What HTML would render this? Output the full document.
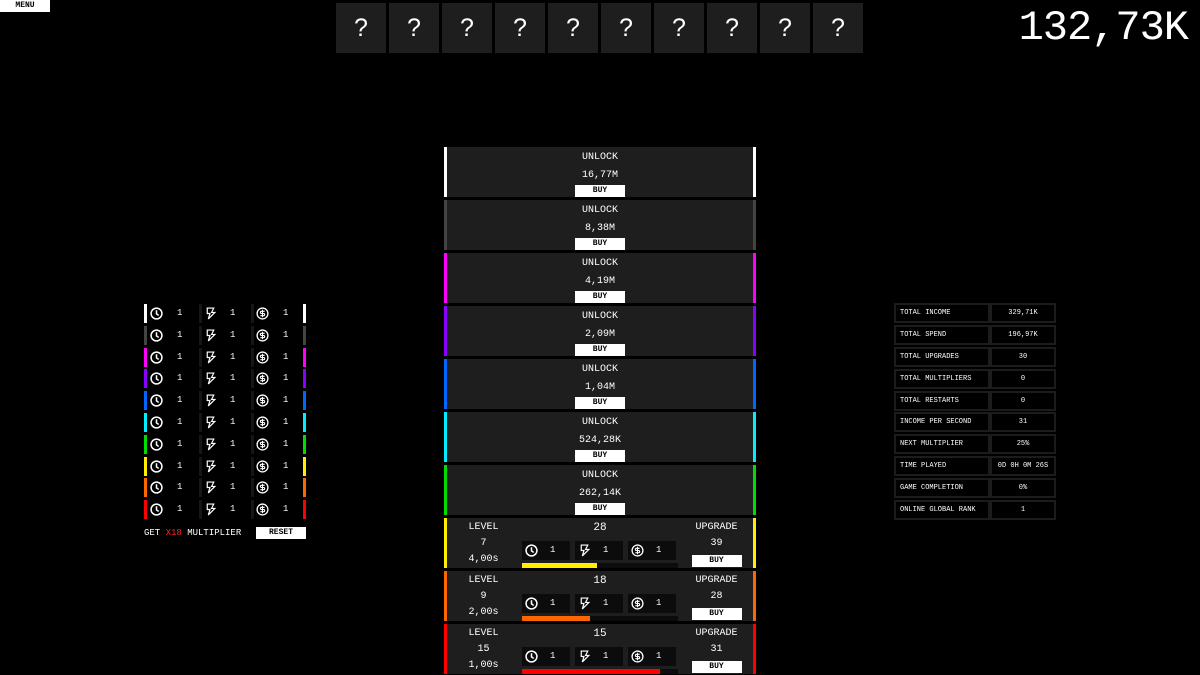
<!DOCTYPE html>
<html><head><meta charset="utf-8"><style>
*{margin:0;padding:0;box-sizing:border-box}
body{width:1200px;height:675px;background:#000;color:#fff;font-family:"Liberation Mono",monospace;position:relative;overflow:hidden}
.a{position:absolute}
.menu{left:0;top:0;width:50px;height:12px;background:#fff;color:#000;font-size:8px;font-weight:bold;text-align:center;line-height:12px}
.q{top:3px;width:50px;height:50px;background:#1e1e1e;font-family:"Liberation Sans",sans-serif;font-size:25px;line-height:50px;text-align:center}
.money{right:12px;top:3px;font-size:42px;line-height:50px;letter-spacing:-1px}
.row{left:444px;width:312px;height:50px;background:#1e1e1e;border-left:3px solid;border-right:3px solid;font-size:10px;text-align:center}
.row .t1{position:absolute;left:0;right:0;top:5px}
.row .t2{position:absolute;left:0;right:0;top:23px}
.buy{position:absolute;background:#fff;color:#000;font-size:8px;font-weight:bold;text-align:center;line-height:12px;height:12px;width:50px}
.row .buy{left:128px;top:38px}
.lc{position:absolute;left:0;width:73px;text-align:center;font-size:10px;line-height:16px;top:2px}
.rc{position:absolute;left:233px;width:73px;text-align:center;font-size:10px;line-height:16px;top:2px}
.rc .buy{position:static;margin:3px auto 0;width:50px;height:12px}
.num{position:absolute;left:75px;width:156px;text-align:center;top:4px;font-size:11px}
.ib{position:absolute;top:23px;width:48px;height:19px;background:#0c0c0c;font-size:9px}
.ib svg{position:absolute;left:3px;top:3px}
.ib span{position:absolute;left:28px;top:4px}
.trk{position:absolute;left:75px;top:45px;width:156px;height:5px;background:#0c0c0c}
.fill{height:5px}
.g{left:144px;width:163px;height:19px}
.g .cb{position:absolute;top:0;width:3px;height:19px}
.g .sep{position:absolute;top:0;width:3px;height:19px;background:#161616}
.g svg{position:absolute;top:3px}
.g span{position:absolute;top:4px;font-size:9px}
.st{left:894px;height:20px;background:#000;border:2px solid #1c1c1c;font-size:7px;line-height:16px}
.s1{width:96px;padding-left:4px}
.s2{left:990px;width:66px;text-align:center}
</style></head><body>
<div class="a menu">MENU</div>
<div class="a q" style="left:336px">?</div><div class="a q" style="left:389px">?</div><div class="a q" style="left:442px">?</div><div class="a q" style="left:495px">?</div><div class="a q" style="left:548px">?</div><div class="a q" style="left:601px">?</div><div class="a q" style="left:654px">?</div><div class="a q" style="left:707px">?</div><div class="a q" style="left:760px">?</div><div class="a q" style="left:813px">?</div>
<div class="a money">132,73K</div>

<svg width="0" height="0" style="position:absolute"><defs>
<symbol id="ck" viewBox="0 0 12 12"><circle cx="6" cy="6" r="5" fill="none" stroke="#fff" stroke-width="1.4"/><path d="M6 3v3.3l2 1.5" fill="none" stroke="#fff" stroke-width="1.4"/></symbol>
<symbol id="bt" viewBox="0 0 12 12"><path d="M3 1h6l-2 4h3l-6 6 1.5-5H3z" fill="none" stroke="#fff" stroke-width="1.1"/></symbol>
<symbol id="dl" viewBox="0 0 12 12"><circle cx="6" cy="6" r="5" fill="none" stroke="#fff" stroke-width="1.2"/><path d="M8 4H5a1 1 0 0 0 0 2h2a1 1 0 0 1 0 2H4M6 2.5v7" fill="none" stroke="#fff" stroke-width="1"/></symbol>
</defs></svg>

<div class="a row" style="top:147px;border-color:#fff"><div class="t1">UNLOCK</div><div class="t2">16,77M</div><div class="buy">BUY</div></div>
<div class="a row" style="top:200px;border-color:#444"><div class="t1">UNLOCK</div><div class="t2">8,38M</div><div class="buy">BUY</div></div>
<div class="a row" style="top:253px;border-color:#f0f"><div class="t1">UNLOCK</div><div class="t2">4,19M</div><div class="buy">BUY</div></div>
<div class="a row" style="top:306px;border-color:#80f"><div class="t1">UNLOCK</div><div class="t2">2,09M</div><div class="buy">BUY</div></div>
<div class="a row" style="top:359px;border-color:#06f"><div class="t1">UNLOCK</div><div class="t2">1,04M</div><div class="buy">BUY</div></div>
<div class="a row" style="top:412px;border-color:#0ef"><div class="t1">UNLOCK</div><div class="t2">524,28K</div><div class="buy">BUY</div></div>
<div class="a row" style="top:465px;border-color:#0d0"><div class="t1">UNLOCK</div><div class="t2">262,14K</div><div class="buy">BUY</div></div>

<div class="a row" style="top:518px;border-color:#fe0"><div class="lc">LEVEL<br>7<br>4,00s</div><div class="num">28</div>
<div class="ib" style="left:75px"><svg width="13" height="13"><use href="#ck"/></svg><span>1</span></div><div class="ib" style="left:128px"><svg width="13" height="13"><use href="#bt"/></svg><span>1</span></div><div class="ib" style="left:181px"><svg width="13" height="13"><use href="#dl"/></svg><span>1</span></div>
<div class="trk"><div class="fill" style="width:75px;background:#fe0"></div></div><div class="rc">UPGRADE<br>39<div class="buy">BUY</div></div></div>

<div class="a row" style="top:571px;border-color:#f60"><div class="lc">LEVEL<br>9<br>2,00s</div><div class="num">18</div>
<div class="ib" style="left:75px"><svg width="13" height="13"><use href="#ck"/></svg><span>1</span></div><div class="ib" style="left:128px"><svg width="13" height="13"><use href="#bt"/></svg><span>1</span></div><div class="ib" style="left:181px"><svg width="13" height="13"><use href="#dl"/></svg><span>1</span></div>
<div class="trk"><div class="fill" style="width:68px;background:#f60"></div></div><div class="rc">UPGRADE<br>28<div class="buy">BUY</div></div></div>

<div class="a row" style="top:624px;border-color:#f00"><div class="lc">LEVEL<br>15<br>1,00s</div><div class="num">15</div>
<div class="ib" style="left:75px"><svg width="13" height="13"><use href="#ck"/></svg><span>1</span></div><div class="ib" style="left:128px"><svg width="13" height="13"><use href="#bt"/></svg><span>1</span></div><div class="ib" style="left:181px"><svg width="13" height="13"><use href="#dl"/></svg><span>1</span></div>
<div class="trk"><div class="fill" style="width:138px;background:#f00"></div></div><div class="rc">UPGRADE<br>31<div class="buy">BUY</div></div></div>

<div class="a g" style="top:304px"><div class="cb" style="left:0;background:#fff"></div><svg style="left:6px" width="13" height="13"><use href="#ck"/></svg><span style="left:33px">1</span><div class="sep" style="left:55px"></div><svg style="left:60px" width="13" height="13"><use href="#bt"/></svg><span style="left:86px">1</span><div class="sep" style="left:107px"></div><svg style="left:112px" width="13" height="13"><use href="#dl"/></svg><span style="left:139px">1</span><div class="cb" style="left:159px;background:#fff"></div></div>
<div class="a g" style="top:326px"><div class="cb" style="left:0;background:#444"></div><svg style="left:6px" width="13" height="13"><use href="#ck"/></svg><span style="left:33px">1</span><div class="sep" style="left:55px"></div><svg style="left:60px" width="13" height="13"><use href="#bt"/></svg><span style="left:86px">1</span><div class="sep" style="left:107px"></div><svg style="left:112px" width="13" height="13"><use href="#dl"/></svg><span style="left:139px">1</span><div class="cb" style="left:159px;background:#444"></div></div>
<div class="a g" style="top:348px"><div class="cb" style="left:0;background:#f0f"></div><svg style="left:6px" width="13" height="13"><use href="#ck"/></svg><span style="left:33px">1</span><div class="sep" style="left:55px"></div><svg style="left:60px" width="13" height="13"><use href="#bt"/></svg><span style="left:86px">1</span><div class="sep" style="left:107px"></div><svg style="left:112px" width="13" height="13"><use href="#dl"/></svg><span style="left:139px">1</span><div class="cb" style="left:159px;background:#f0f"></div></div>
<div class="a g" style="top:369px"><div class="cb" style="left:0;background:#80f"></div><svg style="left:6px" width="13" height="13"><use href="#ck"/></svg><span style="left:33px">1</span><div class="sep" style="left:55px"></div><svg style="left:60px" width="13" height="13"><use href="#bt"/></svg><span style="left:86px">1</span><div class="sep" style="left:107px"></div><svg style="left:112px" width="13" height="13"><use href="#dl"/></svg><span style="left:139px">1</span><div class="cb" style="left:159px;background:#80f"></div></div>
<div class="a g" style="top:391px"><div class="cb" style="left:0;background:#06f"></div><svg style="left:6px" width="13" height="13"><use href="#ck"/></svg><span style="left:33px">1</span><div class="sep" style="left:55px"></div><svg style="left:60px" width="13" height="13"><use href="#bt"/></svg><span style="left:86px">1</span><div class="sep" style="left:107px"></div><svg style="left:112px" width="13" height="13"><use href="#dl"/></svg><span style="left:139px">1</span><div class="cb" style="left:159px;background:#06f"></div></div>
<div class="a g" style="top:413px"><div class="cb" style="left:0;background:#0ef"></div><svg style="left:6px" width="13" height="13"><use href="#ck"/></svg><span style="left:33px">1</span><div class="sep" style="left:55px"></div><svg style="left:60px" width="13" height="13"><use href="#bt"/></svg><span style="left:86px">1</span><div class="sep" style="left:107px"></div><svg style="left:112px" width="13" height="13"><use href="#dl"/></svg><span style="left:139px">1</span><div class="cb" style="left:159px;background:#0ef"></div></div>
<div class="a g" style="top:435px"><div class="cb" style="left:0;background:#0d0"></div><svg style="left:6px" width="13" height="13"><use href="#ck"/></svg><span style="left:33px">1</span><div class="sep" style="left:55px"></div><svg style="left:60px" width="13" height="13"><use href="#bt"/></svg><span style="left:86px">1</span><div class="sep" style="left:107px"></div><svg style="left:112px" width="13" height="13"><use href="#dl"/></svg><span style="left:139px">1</span><div class="cb" style="left:159px;background:#0d0"></div></div>
<div class="a g" style="top:457px"><div class="cb" style="left:0;background:#fe0"></div><svg style="left:6px" width="13" height="13"><use href="#ck"/></svg><span style="left:33px">1</span><div class="sep" style="left:55px"></div><svg style="left:60px" width="13" height="13"><use href="#bt"/></svg><span style="left:86px">1</span><div class="sep" style="left:107px"></div><svg style="left:112px" width="13" height="13"><use href="#dl"/></svg><span style="left:139px">1</span><div class="cb" style="left:159px;background:#fe0"></div></div>
<div class="a g" style="top:478px"><div class="cb" style="left:0;background:#f60"></div><svg style="left:6px" width="13" height="13"><use href="#ck"/></svg><span style="left:33px">1</span><div class="sep" style="left:55px"></div><svg style="left:60px" width="13" height="13"><use href="#bt"/></svg><span style="left:86px">1</span><div class="sep" style="left:107px"></div><svg style="left:112px" width="13" height="13"><use href="#dl"/></svg><span style="left:139px">1</span><div class="cb" style="left:159px;background:#f60"></div></div>
<div class="a g" style="top:500px"><div class="cb" style="left:0;background:#f00"></div><svg style="left:6px" width="13" height="13"><use href="#ck"/></svg><span style="left:33px">1</span><div class="sep" style="left:55px"></div><svg style="left:60px" width="13" height="13"><use href="#bt"/></svg><span style="left:86px">1</span><div class="sep" style="left:107px"></div><svg style="left:112px" width="13" height="13"><use href="#dl"/></svg><span style="left:139px">1</span><div class="cb" style="left:159px;background:#f00"></div></div>

<div class="a" style="left:144px;top:527px;font-size:9px;line-height:12px">GET <span style="color:#f22">X18</span> MULTIPLIER</div>
<div class="a buy" style="left:256px;top:527px;width:50px">RESET</div>

<div class="a st s1" style="top:303px">TOTAL INCOME</div><div class="a st s2" style="top:303px">329,71K</div>
<div class="a st s1" style="top:325px">TOTAL SPEND</div><div class="a st s2" style="top:325px">196,97K</div>
<div class="a st s1" style="top:347px">TOTAL UPGRADES</div><div class="a st s2" style="top:347px">30</div>
<div class="a st s1" style="top:369px">TOTAL MULTIPLIERS</div><div class="a st s2" style="top:369px">0</div>
<div class="a st s1" style="top:391px">TOTAL RESTARTS</div><div class="a st s2" style="top:391px">0</div>
<div class="a st s1" style="top:412px">INCOME PER SECOND</div><div class="a st s2" style="top:412px">31</div>
<div class="a st s1" style="top:434px">NEXT MULTIPLIER</div><div class="a st s2" style="top:434px">25%</div>
<div class="a st s1" style="top:456px">TIME PLAYED</div><div class="a st s2" style="top:456px">0D 0H 0M 26S</div>
<div class="a st s1" style="top:478px">GAME COMPLETION</div><div class="a st s2" style="top:478px">0%</div>
<div class="a st s1" style="top:500px">ONLINE GLOBAL RANK</div><div class="a st s2" style="top:500px">1</div>
</body></html>
